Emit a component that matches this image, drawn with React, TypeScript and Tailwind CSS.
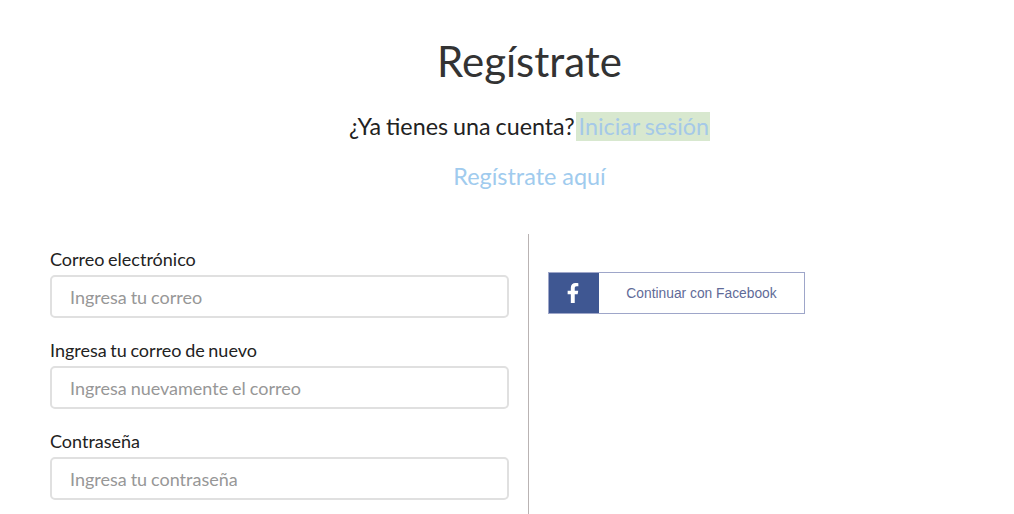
import { FaFacebookF } from 'react-icons/fa'

const fields = [
  { label: 'Correo electrónico', placeholder: 'Ingresa tu correo' },
  { label: 'Ingresa tu correo de nuevo', placeholder: 'Ingresa nuevamente el correo' },
  { label: 'Contraseña', placeholder: 'Ingresa tu contraseña' },
]

export default function App() {
  return (
    <div className="h-[514px] w-[1014px] overflow-hidden bg-white font-['Lato',sans-serif] text-[#222]">
      {/* cabecera */}
      <div className="flex flex-col items-center pl-[45px]">
        <h1 className="mt-[34px] text-[42px] leading-[54px] text-[#333]">Regístrate</h1>
        <p className="mt-[24px] flex h-7 items-center text-[23.3px] leading-7 [word-spacing:-1px]">
          ¿Ya tienes una cuenta?
          <a className="ml-[1px] bg-[#d8e8cf] pl-[3px] pr-[1px] leading-[29px] text-[#a5c9e8]">Iniciar sesión</a>
        </p>
        <a className="mt-[22px] text-[23.4px] leading-7 text-[#a0cbee]">Regístrate aquí</a>
      </div>

      <div className="mt-[44px] flex h-[280px]">
        {/* formulario */}
        <div className="w-[529px] border-r border-[#b9b3b3] pl-[50px] pr-5 pt-[14px]">
          {fields.map((f) => (
            <div key={f.label} className="mb-[21px]">
              <label className="block text-[18px] leading-[22px] text-[#222] [word-spacing:-1px]">{f.label}</label>
              <input
                readOnly
                placeholder={f.placeholder}
                className="mt-[5px] block h-[43px] w-[459px] rounded-[5px] border-2 border-[#e0e0e0] bg-white px-[18px] text-[18px] [word-spacing:-0.7px] outline-none placeholder:text-[#979797]"
              />
            </div>
          ))}
        </div>

        {/* facebook */}
        <div className="pl-[19px] pt-[38px]">
          <button className="flex h-[42px] w-[257px] items-stretch border border-[#9ea6c9] bg-white">
            <span className="flex w-[50px] items-center justify-center bg-[#3f5792] pr-[2px] text-white">
              <FaFacebookF className="h-[20px] w-[20px]" />
            </span>
            <span className="flex-1 text-center font-['Liberation_Sans',sans-serif] text-[13.8px] leading-[42px] text-[#5f6b98]">
              Continuar con Facebook
            </span>
          </button>
        </div>
      </div>
    </div>
  )
}
